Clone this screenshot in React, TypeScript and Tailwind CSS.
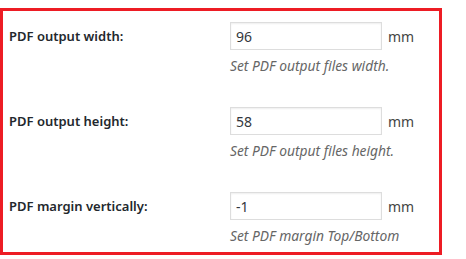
import React from 'react';

const rows = [
  { label: 'PDF output width:', value: '96', hint: 'Set PDF output files width.' },
  { label: 'PDF output height:', value: '58', hint: 'Set PDF output files height.' },
  { label: 'PDF margin vertically:', value: '-1', hint: 'Set PDF margin Top/Bottom' },
];

export default function App() {
  return (
    <div className="w-[466px] h-[259px] bg-white pt-[8px] overflow-hidden" style={{ fontFamily: '"Noto Sans", "Open Sans", sans-serif' }}>
      <div className="w-[442px] h-[247px] border-[3px] border-[#ed1c24] overflow-hidden">
        {rows.map((row) => (
          <div key={row.label} className="flex h-[85px] pt-[11px]">
            <div className="w-[227px] pl-[6px] pt-[2px] h-[28px] flex items-center text-[13px] font-semibold text-[#23282d]">
              {row.label}
            </div>
            <div className="flex flex-col">
              <div className="flex items-center">
                <input
                  readOnly
                  value={row.value}
                  className="w-[152px] h-[28px] border border-[#dddddd] px-[5px] text-[14px] text-[#32373c] shadow-[inset_0_1px_2px_rgba(0,0,0,0.07)] outline-none"
                />
                <span className="ml-[6px] text-[14px] text-[#444]">mm</span>
              </div>
              <p className="mt-[6px] text-[13.8px] leading-[20px] italic text-[#666]">{row.hint}</p>
            </div>
          </div>
        ))}
      </div>
    </div>
  );
}
